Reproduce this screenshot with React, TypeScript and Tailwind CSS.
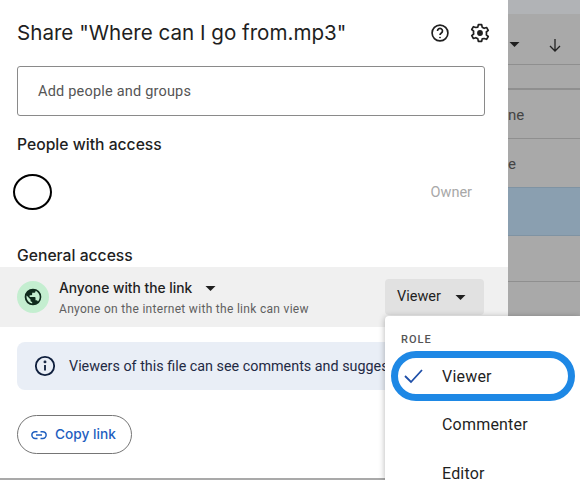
import React from "react";

const font = { fontFamily: "Roboto, 'Liberation Sans', sans-serif" };

function Caret({ className = "" }: { className?: string }) {
  return (
    <svg width="11" height="5" viewBox="0 0 10 5" className={className}>
      <path d="M0 0h10L5 5z" fill="#1f1f1f" />
    </svg>
  );
}

function Backdrop() {
  return (
    <div className="flex-1 min-w-0 h-full bg-[#a9a9a9] flex flex-col text-[#444] text-[15px] overflow-hidden">
      <div className="h-[14px] bg-[#b1b3b6] shrink-0" />
      <div className="h-[51px] shrink-0 border-b border-[#8f8f8f] flex items-center pl-[1px] pt-[11px]">
        <Caret />
        <svg width="16" height="16" viewBox="0 0 16 16" className="ml-[27px]">
          <path d="M8 2v12M3 9l5 5 5-5" fill="none" stroke="#222" strokeWidth="1.3" />
        </svg>
      </div>
      <div className="h-[25px] shrink-0 border-b-2 border-[#8f8f8f]" />
      <div className="h-[49px] shrink-0 border-b border-[#8f8f8f] flex items-center pt-[3px]">ne</div>
      <div className="h-[48px] shrink-0 flex items-center pt-[3px]">e</div>
      <div className="h-[49px] shrink-0 bg-[#8a9fb0] border-y border-[#7f93a3]" />
      <div className="h-[46px] shrink-0 border-b border-[#8f8f8f]" />
    </div>
  );
}

export default function App() {
  return (
    <div className="w-[580px] h-[480px] relative overflow-hidden bg-[#a9a9a9] flex" style={font}>
      <div className="w-[508px] h-[478px] bg-white flex flex-col shrink-0">
        <div className="flex items-center pl-[17px] pt-[17px] h-[49px]">
          <h1 className="font-['Inter'] text-[20.6px] leading-[30px] text-[#1f1f1f] font-normal whitespace-nowrap">
            Share "Where can I go from.mp3"
          </h1>
          <div className="ml-auto flex items-center gap-[20px] pr-[18px]">
            <svg width="20" height="20" viewBox="0 0 24 24" fill="none" stroke="#1f1f1f" strokeWidth="2">
              <circle cx="12" cy="12" r="9.5" />
              <path d="M9 9.5a3 3 0 1 1 4.6 2.5c-1 .7-1.6 1.3-1.6 2.5" />
              <circle cx="12" cy="17.5" r=".6" fill="#1f1f1f" strokeWidth="1" />
            </svg>
            <svg width="20" height="20" viewBox="0 0 24 24" fill="none" stroke="#1f1f1f" strokeWidth="2" strokeLinejoin="round">
              <path d="M10 2h4l.6 3 2.4 1.4 2.9-1 2 3.4-2.3 2a7 7 0 0 1 0 3.4l2.3 2-2 3.4-2.9-1L14.6 19 14 22h-4l-.6-3L7 17.6l-2.9 1-2-3.4 2.3-2a7 7 0 0 1 0-3.4l-2.3-2 2-3.4 2.9 1L9.4 5z" />
              <circle cx="12" cy="12" r="3.5" fill="#1f1f1f" stroke="none" />
            </svg>
          </div>
        </div>

        <div className="mx-[17px] mt-[17px] w-[468px] h-[50px] border border-[#8a8a8a] rounded-[3px] flex items-center pl-[20px] pt-[2px] text-[14.5px] text-[#555] tracking-[0.2px]">
          Add people and groups
        </div>

        <h2 className="font-['Inter'] ml-[17px] mt-[17px] text-[15.7px] leading-[24px] font-medium text-[#1f1f1f]">People with access</h2>

        <div className="flex items-center h-[40px] mt-[15px] pl-[13px] pr-[36px]">
          <div className="w-[39px] h-[36px] rounded-[50%] border-2 border-black" />
          <span className="ml-auto text-[14.5px] text-[#a8a8a8] pt-[2px]">Owner</span>
        </div>

        <h2 className="font-['Inter'] ml-[17px] mt-[31px] pt-[1px] h-[24px] text-[15.7px] leading-[24px] font-medium text-[#1f1f1f]">General access</h2>

        <div className="h-[60px] bg-[#f0f0f0] flex items-center pl-[17px] pr-[24px]">
          <div className="w-[32px] h-[32px] rounded-full bg-[#c4eed0] flex items-center justify-center">
            <svg width="20" height="20" viewBox="0 0 24 24" fill="#0f2a1c">
              <path d="M12 2a10 10 0 1 0 0 20 10 10 0 0 0 0-20zM4.2 12c0-.7.1-1.3.2-1.9L9 15v1c0 1.1.9 2 2 2v1.8A7.9 7.9 0 0 1 4.2 12zm13.7 5.3c-.3-.8-1-1.3-1.9-1.3h-1v-3c0-.6-.4-1-1-1H8v-2h2c.6 0 1-.4 1-1V7h2c1.1 0 2-.9 2-2v-.4a7.9 7.9 0 0 1 2.9 12.7z" />
            </svg>
          </div>
          <div className="ml-[10px] flex flex-col pt-[1px]">
            <div className="flex items-center font-['Inter'] text-[13.8px] leading-[20px] font-medium text-[#1f1f1f]">
              Anyone with the link
              <Caret className="ml-[13px]" />
            </div>
            <div className="text-[12px] leading-[16px] mt-[3px] text-[#5f5f5f] tracking-[0.3px] whitespace-nowrap">
              Anyone on the internet with the link can view
            </div>
          </div>
          <div className="ml-auto w-[99px] h-[36px] bg-[#e1e1e1] rounded-[4px] flex items-center pl-[12px] text-[14.5px] text-[#1f1f1f]">
            Viewer
            <Caret className="ml-[14px]" />
          </div>
        </div>

        <div className="mx-[17px] mt-[15px] w-[474px] h-[48px] bg-[#e9eef6] rounded-[8px] flex items-center pl-[17px] overflow-hidden">
          <svg width="22" height="22" viewBox="0 0 24 24" fill="none" stroke="#0f1f3d" strokeWidth="2" className="shrink-0">
            <circle cx="12" cy="12" r="10" />
            <path d="M12 11v6" />
            <circle cx="12" cy="7.5" r=".6" fill="#0f1f3d" />
          </svg>
          <span className="ml-[13px] pt-[1px] text-[14.35px] text-[#1f2a44] whitespace-nowrap">
            Viewers of this file can see comments and suggestions
          </span>
        </div>

        <div className="ml-[17px] mt-[25px] w-[115px] h-[39px] border border-[#757575] rounded-full flex items-center pl-[12px] font-['Inter'] text-[13.7px] font-medium text-[#1f5fbf]">
          <svg width="18" height="18" viewBox="0 0 24 24" fill="none" stroke="#1f5fbf" strokeWidth="2">
            <path d="M10 7.5H7a4.5 4.5 0 0 0 0 9h3M14 7.5h3a4.5 4.5 0 0 1 0 9h-3M8 12h8" />
          </svg>
          <span className="ml-[7px] whitespace-nowrap">Copy link</span>
        </div>
      </div>

      <Backdrop />

      <div className="absolute left-[385px] top-[316px] w-[195px] h-[164px] bg-white shadow-[0_1px_6px_rgba(0,0,0,0.3)] rounded-tl-[4px]">
        <div className="absolute left-[16px] top-[17px] text-[11px] leading-[14px] font-medium tracking-[1px] text-[#555]">ROLE</div>
        <div className="absolute left-[57px] top-[50px] text-[16px] leading-[22px] text-[#1f1f1f] tracking-[0.2px]">Viewer</div>
        <div className="absolute left-[57px] top-[98px] text-[16px] leading-[22px] text-[#1f1f1f] tracking-[0.2px]">Commenter</div>
        <div className="absolute left-[57px] top-[147px] text-[16px] leading-[22px] text-[#1f1f1f] tracking-[0.2px]">Editor</div>
        <svg width="20" height="16" viewBox="0 0 20 16" className="absolute left-[18px] top-[52px]">
          <path d="M2 8l6 6L19 2" fill="none" stroke="#1f4fa8" strokeWidth="1.8" />
        </svg>
      </div>
      <div className="absolute left-[391px] top-[351px] w-[184px] h-[50px] rounded-full border-[7px] border-[#1e88e5]" />
    </div>
  );
}
